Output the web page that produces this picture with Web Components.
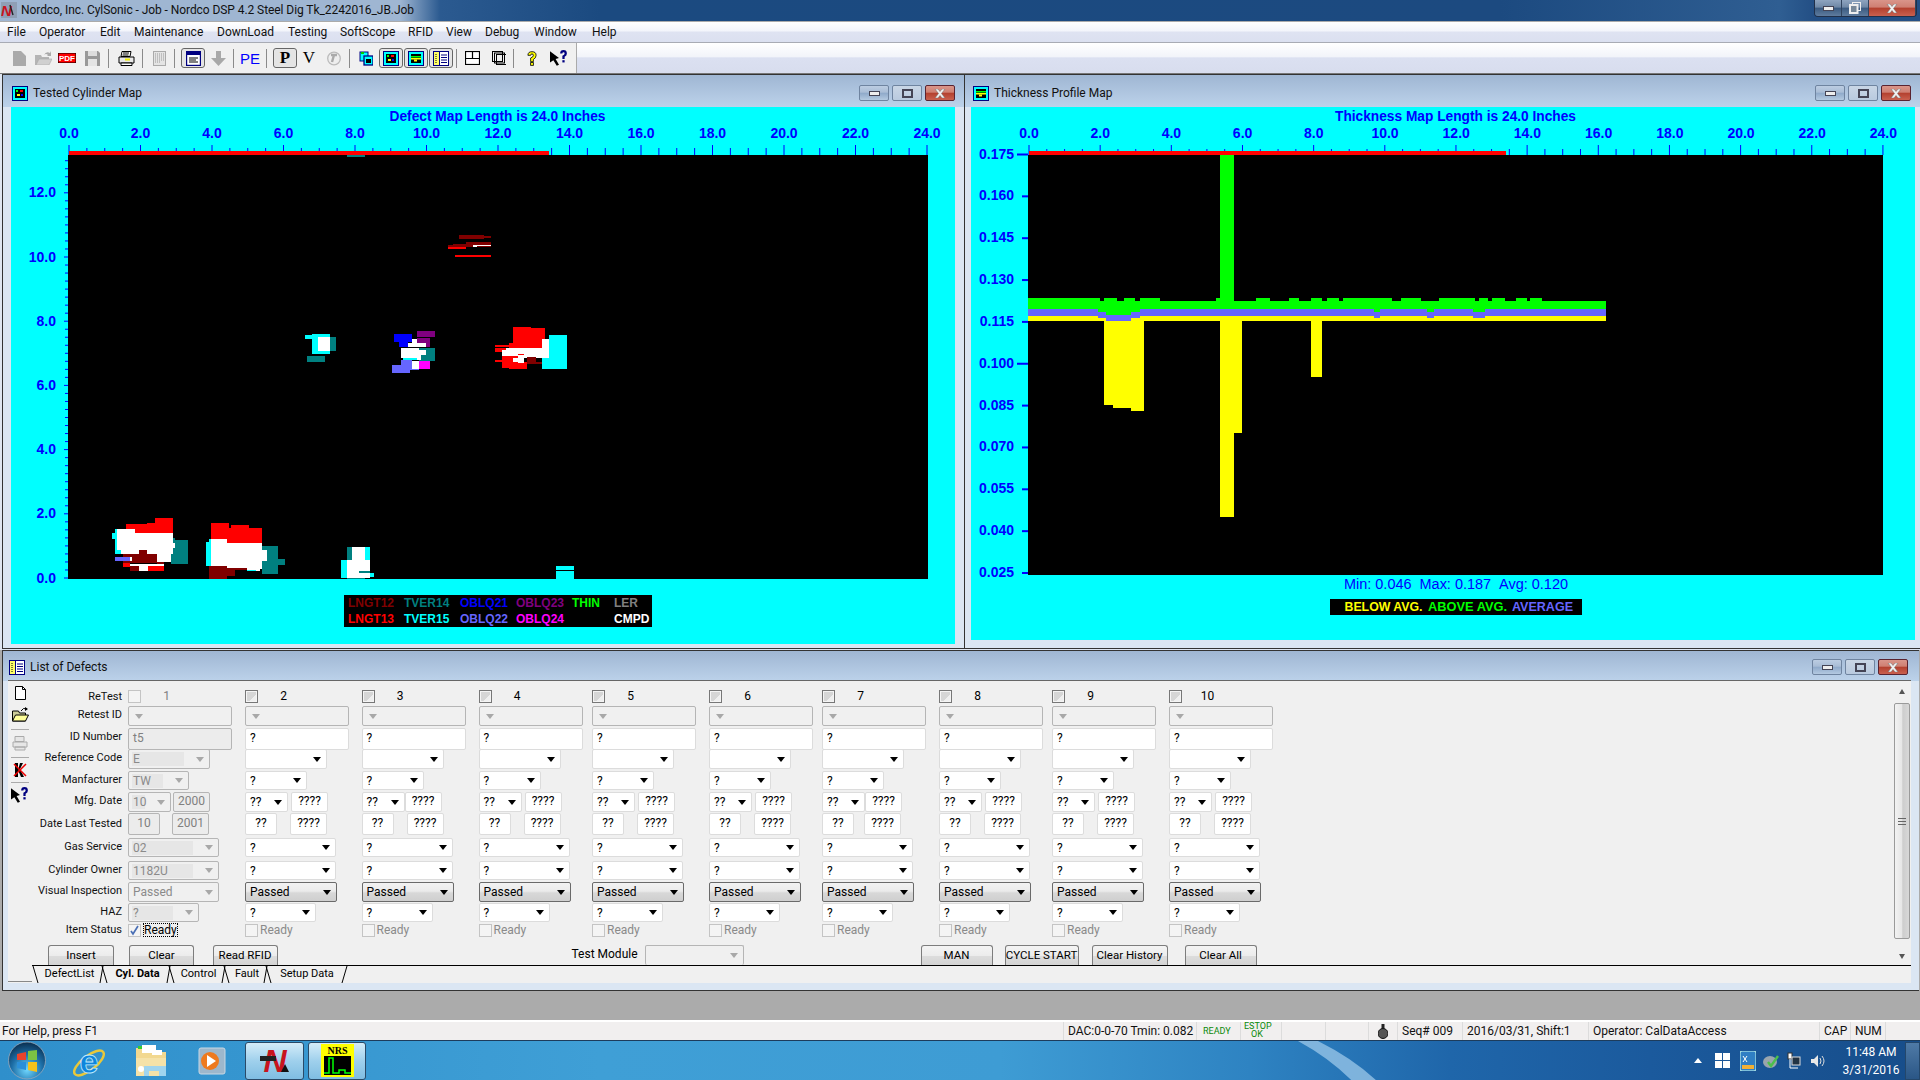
<!DOCTYPE html>
<html>
<head>
<meta charset="utf-8">
<title>CylSonic</title>
<style>
  html, body { margin: 0; padding: 0; width: 1920px; height: 1080px; overflow: hidden; background: #ababab; }
  body { display: flex; flex-direction: column; font: 12px Roboto, "Liberation Sans", sans-serif; color: #000; }
  mdi-area { flex: 1; min-height: 0; }
</style>
</head>
<body>
  <app-titlebar>Nordco, Inc. CylSonic - Job - Nordco DSP 4.2 Steel Dig Tk_2242016_JB.Job</app-titlebar>
  <app-menubar></app-menubar>
  <app-toolbar></app-toolbar>
  <mdi-area>
    <mdi-window slot="left" name="Tested Cylinder Map" icon="map" style="width:962px;height:575px;--ml:8px">
      <defect-map></defect-map>
    </mdi-window>
    <mdi-window slot="right" name="Thickness Profile Map" icon="profile" style="width:956px;height:575px;--ml:6px;--pl:8px">
      <thickness-map></thickness-map>
    </mdi-window>
    <mdi-window slot="bottom" name="List of Defects" icon="list" style="width:1917px;height:341px;--ml:5px;--pl:6px;--pr:11px;--head:30px;--pt:2px">
      <defect-form></defect-form>
    </mdi-window>
  </mdi-area>
  <app-statusbar></app-statusbar>
  <app-taskbar></app-taskbar>

<script>
const ICONS = {
  map: `<svg width="16" height="15" viewBox="0 0 16 15"><rect x=".5" y=".5" width="15" height="14" fill="#0ff" stroke="#000080"/><rect x="3" y="3" width="10" height="9" fill="#000"/><rect x="4" y="4" width="2" height="2" fill="#0f0"/><rect x="8" y="4" width="3" height="2" fill="#f00"/><rect x="5" y="8" width="3" height="2" fill="#ff0"/><rect x="9" y="8" width="2" height="2" fill="#00f"/></svg>`,
  profile: `<svg width="16" height="15" viewBox="0 0 16 15"><rect x=".5" y=".5" width="15" height="14" fill="#0ff" stroke="#000080"/><rect x="3" y="3" width="10" height="9" fill="#000"/><rect x="3" y="5" width="10" height="1.5" fill="#0f0"/><rect x="3" y="7" width="10" height="1.5" fill="#ff0"/><rect x="6" y="8.5" width="3" height="2" fill="#ff0"/></svg>`,
  list: `<svg width="16" height="15" viewBox="0 0 16 15"><rect x=".5" y=".5" width="15" height="14" fill="#fff" stroke="#000080"/><rect x="1" y="1" width="5" height="13" fill="#ff6"/><path d="M6.5 1v13M8 4h6M8 6.5h6M8 9h6M8 11.5h6" stroke="#000080"/><path d="M3 3v9" stroke="#000" stroke-dasharray="1 1"/></svg>`
};

// simple base: subclasses give css() and html(), rendered when connected
class Base extends HTMLElement {
  connectedCallback() {
    if (this.shadowRoot) return;
    this.attachShadow({ mode: "open" }).innerHTML = `<style>${this.css()}</style>${this.html()}`;
  }
  css() { return ""; }
  html() { return "<slot></slot>"; }
  num(name, d) { return this.hasAttribute(name) ? Number(this.getAttribute(name)) : d; }
}

class AppTitlebar extends Base {
  css() { return `
    :host { display: flex; height: 21px; align-items: stretch; flex: none;
      background: linear-gradient(90deg,#9fb6d2 0,#9fb6d2 400px,#2b5a90 440px,#1b4a80 600px,#1c4a80 1500px,#2f5e92 1780px,#234f85 1814px); }
    .ic { width: 20px; padding: 2px 0 0 1px; box-sizing: border-box; }
    .txt { flex: 1; line-height: 21px; padding-left: 1px; color: #111; font-size: 12px; white-space: nowrap; letter-spacing: -.07px;}
    .btns { display: flex; height: 17px; margin-right: 3px; border: 1px solid #20304a; border-top: 0; border-radius: 0 0 4px 4px; box-sizing: border-box; overflow: hidden; }
    win-btn { --w: 27px; --h: 16px; }
  `; }
  html() { return `<div class="ic"><svg width="16" height="16" viewBox="0 0 16 16"><rect width="16" height="16" fill="#8f9fb5"/><text x="0" y="14" font-family="Liberation Sans" font-weight="bold" font-style="italic" font-size="15" fill="#c8141e">N</text><path d="M9 3l3 10" stroke="#222" stroke-width="1.4"/></svg></div>
    <div class="txt"><slot></slot></div>
    <div class="btns"><win-btn kind="min" flat></win-btn><win-btn kind="max2" flat></win-btn><win-btn kind="close" flat style="--w:47px"></win-btn></div>`; }
}

class WinBtn extends Base {
  css() {
    const flat = this.hasAttribute("flat");
    const close = this.getAttribute("kind") == "close";
    const bg = close ? "linear-gradient(#d9958a 0,#cf7f72 45%,#b3402e 50%,#c9604f 100%)"
      : this.getAttribute("kind") == "max" ? "linear-gradient(#c9d6e6,#b9cadf)"
      : flat ? "linear-gradient(#8ea4bf 0,#6f88a6 45%,#3a5a80 50%,#5f7c9e 100%)" : "linear-gradient(#bccde2 0,#a9bdd6 45%,#8ea9c9 50%,#b4c9e1 100%)";
    const bd = flat ? "0" : (close ? "1px solid #5a2330" : "1px solid #6f84a0");
    return `:host { display: block; width: var(--w,31px); height: var(--h,16px); box-sizing: border-box; background: ${bg}; border: ${bd};
      ${flat ? "border-right: 1px solid #30445f;" : "border-radius: 2px;"} display: flex; align-items: center; justify-content: center; }`;
  }
  html() {
    const k = this.getAttribute("kind");
    if (k == "min") return `<svg width="11" height="5"><rect x=".5" y=".5" width="10" height="4" fill="#eee" stroke="#445"/></svg>`;
    if (k == "max") return `<svg width="11" height="9"><rect x="1" y="1" width="9" height="7" fill="none" stroke="#445" stroke-width="2"/></svg>`;
    if (k == "max2") return `<svg width="12" height="12"><rect x="3.5" y=".5" width="8" height="8" fill="none" stroke="#eee"/><rect x="1" y="3" width="7.5" height="8" fill="#789" stroke="#eee" stroke-width="2"/></svg>`;
    return `<svg width="12" height="9" viewBox="0 0 12 9"><path d="M1 0h3l2 2.500 2-2.500h3L7.500 4.500 11 9H8L6 6.500 4 9H1l3.500-4.500z" fill="#f2f2f2" stroke="#666" stroke-width=".5"/></svg>`;
  }
}

class AppMenubar extends Base {
  css() { return `
    :host { display: flex; height: 21px; flex: none; box-sizing: border-box; padding-left: 7px; align-items: center;
      background: linear-gradient(#fff 0,#f3f5fb 45%,#dfe3f2 50%,#dbe0f0 100%); border-bottom: 1px solid #a8abb4; margin-top: 1px; font-size: 12px; color: #111; }
    span { white-space: nowrap; }
  `; }
  html() {
    const items = [["File",0,18],["Operator",14,47],["Edit",14,20],["Maintenance",14,69],["DownLoad",14,56],["Testing",15,39],["SoftScope",13,54],["RFID",14,23],["View",15,25],["Debug",14,35],["Window",14,44],["Help",14,30]];
    return items.map(([t, m, w]) => `<span style="margin-left:${m}px;width:${w}px">${t}</span>`).join("");
  }
}

class AppToolbar extends Base {
  css() { return `
    :host { display: flex; height: 31px; flex: none; box-sizing: border-box; background: linear-gradient(#fff 0,#f2f4fa 45%,#dbe0f1 50%,#d8ddee 100%); border-bottom: 1px solid #777; }
    .bar { display: flex; width: 577px; height: 30px; background: #f0f0f0; border-right: 1px solid #aaa; box-sizing: border-box; align-items: center; position: relative; }
    i { display: block; flex: none; font-style: normal; height: 20px; display: flex; align-items: center; justify-content: center; box-sizing: border-box; }
    .sep { width: 1px; background: #8a8a8a; height: 19px; }
    .on { border: 1px solid #666; border-radius: 3px; background: #e4e4e4; box-shadow: inset 0 0 1px #fff; }
    .t { font: 15px "Liberation Sans",sans-serif; color: #00f; }
    .s { font: bold 17px "Liberation Serif",serif; }
    .v { font: 17px "Liberation Serif",serif; }
  `; }
  html() {
    const w = (m, wd, inner, cls = "") => `<i class="${cls}" style="margin-left:${m}px;width:${wd}px">${inner}</i>`;
    const sep = (m) => `<i class="sep" style="margin-left:${m}px"></i>`;
    const windowed = `<svg width="15" height="15"><rect x=".5" y=".5" width="14" height="14" fill="#fff" stroke="#000080" stroke-width="1.4"/><rect x="1" y="1" width="13" height="3" fill="#000080"/><path d="M3 7h9M3 9h7M3 11h9" stroke="#000"/></svg>`;
    return `<div class="bar">
      ${w(12,14,`<svg width="13" height="15"><path d="M0 0h8l5 5v10H0z" fill="#aaa"/></svg>`)}
      ${w(9,17,`<svg width="17" height="14"><path d="M0 4h6l1 2h7v8H0z" fill="#b5b5b5"/><path d="M1 14l3-6h13l-3 6z" fill="#d0d0d0" stroke="#aaa" stroke-width=".6"/><path d="M9 4q2-4 6-2l1-2v5h-4l1-1q-2-2-4 0" fill="#aaa"/></svg>`)}
      ${w(6,18,`<svg width="18" height="10"><rect width="18" height="10" fill="#f00" stroke="#000" stroke-width="1"/><text x="9" y="8" text-anchor="middle" font-family="Liberation Sans" font-weight="bold" font-size="8" fill="#fff">PDF</text></svg>`)}
      ${w(9,15,`<svg width="15" height="15"><path d="M0 0h13l2 2v13H0z" fill="#999"/><rect x="3" y="0" width="9" height="5" fill="#ddd"/><rect x="3" y="8" width="9" height="7" fill="#e4e4e4"/></svg>`)}
      ${sep(8)}
      ${w(9,17,`<svg width="17" height="15"><path d="M4 .5h9l-1 5H3z" fill="#fff" stroke="#000"/><path d="M1 6h15v6H1z" fill="#e8e8e8" stroke="#000"/><path d="M3 12h11v2.500H3z" fill="#fff" stroke="#000"/><rect x="7" y="7.500" width="5" height="2" fill="#ee0"/><path d="M5 2h6M4.500 4h6" stroke="#000"/></svg>`)}
      ${sep(7)}
      ${w(10,13,`<svg width="13" height="15"><rect x=".5" y=".5" width="12" height="14" fill="#e4e4e4" stroke="#aaa"/><path d="M2 3h9M2 5h9M2 7h9M2 9h9M2 11h6" stroke="#999" stroke-dasharray="1 1"/></svg>`)}
      ${sep(8)}
      ${w(6,24,windowed,"on")}
      ${w(6,15,`<svg width="15" height="15"><path d="M5 0h5v7h5l-7.500 8L0 7h5z" fill="#a8a8a8"/></svg>`)}
      ${sep(7)}
      ${w(8,16,`PE`,"t")}
      ${sep(8)}
      ${w(6,24,`P`,"on s")}
      ${w(4,16,`V`,"v")}
      ${w(10,14,`<svg width="14" height="15"><circle cx="7" cy="7.500" r="6.300" fill="#eee" stroke="#bbb" stroke-width="1.300"/><path d="M4 4h6M7 4l-2 7" stroke="#aaa" stroke-width="2.400"/></svg>`)}
      ${sep(8)}
      ${w(9,14,`<svg width="15" height="15"><rect x="1" y="1" width="8" height="9" fill="#0ff" stroke="#000080"/><rect x="5" y="5" width="9" height="9" fill="#0ff" stroke="#000080" stroke-width="1.300"/><rect x="7" y="8" width="5" height="4" fill="#000"/><rect x="2" y="1" width="3" height="2" fill="#0c0"/></svg>`)}
      ${w(6,24,ICONS.map,"on")}
      ${w(1,24,ICONS.profile,"on")}
      ${w(1,24,ICONS.list,"on")}
      ${sep(3)}
      ${w(8,15,`<svg width="15" height="14"><rect x=".5" y=".5" width="14" height="13" fill="#fff" stroke="#000" stroke-width="1.200"/><path d="M0 7.500h15M7.500 0v7" stroke="#000" stroke-width="1.200"/></svg>`)}
      ${w(12,14,`<svg width="15" height="14"><rect x=".5" y=".5" width="10" height="10" fill="none" stroke="#000"/><rect x="2.500" y="2" width="10" height="10" fill="none" stroke="#000"/><rect x="4.500" y="3.500" width="10" height="10" fill="none" stroke="#000"/></svg>`)}
      ${sep(7)}
      ${w(13,10,`<svg width="11" height="17" viewBox="0 0 11 17"><path d="M1 5q0-4 4.500-4t4.500 4q0 3-3 4.500V12H4V8q3-1 3-3 0-1.500-1.500-1.500T4 5z" fill="#ff0" stroke="#000" stroke-width=".9"/><rect x="4" y="13" width="3" height="3" fill="#ff0" stroke="#000" stroke-width=".9"/></svg>`)}
      ${w(13,18,`<svg width="18" height="17" viewBox="0 0 16 15"><path d="M0 1l8 6-3 1 3 5-2 1-3-5-3 2z" fill="#000"/><path d="M9 3q0-3 3-3t3 3q0 2-2 3v2h-2V5q2-1 2-2 0-1-1-1t-1 1z" fill="#000080"/><rect x="11" y="9" width="2" height="2" fill="#000080"/></svg>`)}
    </div>`;
  }
}

class MdiArea extends Base {
  css() { return `
    :host { display: block; background: #ababab; }
    .top { display: flex; height: 576px; background: #dfe6f1; box-sizing: border-box; padding-left: 2px; }
    .b { padding-left: 2px; background: #ababab; }
  `; }
  html() { return `<div class="top"><slot name="left"></slot><slot name="right"></slot></div><div class="b"><slot name="bottom"></slot></div>`; }
}

class MdiWindow extends Base {
  css() { return `
    :host { display: flex; flex-direction: column; box-sizing: border-box; background: #dbe6f3; border: 1px solid #333; border-width: 1px 0 1px 1px; }
    .head { height: var(--head,32px); flex: none; display: flex; align-items: center; background: linear-gradient(#9fb6d3,#bcd2ea); padding: var(--pt,4px) var(--pr,9px) 0 var(--pl,9px); font-size: 12px; color: #111; box-sizing: border-box; }
    .head svg { display: block; }
    .name { flex: 1; margin-left: 5px; }
    win-btn { margin-left: 3px; --w: 30px; --h: 16px; }
    .body { flex: 1; min-height: 0; margin: 0 0 2px var(--ml,7px); }
  `; }
  html() { return `<div class="head">${ICONS[this.getAttribute("icon")]}<span class="name">${this.getAttribute("name")}</span>
    <win-btn kind="min"></win-btn><win-btn kind="max"></win-btn><win-btn kind="close"></win-btn></div><div class="body"><slot></slot></div>`; }
}

// shared svg helpers for the two charts, all in page coordinates
const rect = (x1, y1, x2, y2, c) => `<rect x="${x1}" y="${y1}" width="${x2 - x1}" height="${y2 - y1}" fill="${c}"/>`;
const label = (x, y, s, o = {}) => `<text x="${x}" y="${y}" text-anchor="${o.a || "middle"}" font-family="Liberation Sans" font-size="${o.size || 14}" ${o.bold === false ? "" : 'font-weight="bold"'} fill="${o.fill || "#00f"}" ${o.len ? `textLength="${o.len}" lengthAdjust="spacingAndGlyphs"` : ""}>${s}</text>`;

const DK = "#800000", RD = "#f00", TL = "#008080", CY = "#0ff", WH = "#fff", PU = "#800080", BL = "#00f", PW = "#6666ff", MG = "#f0f";
const BLOBS = [
  [1117,105,1187,117,DK],[1187,108,1207,114,DK],[1100,132,1137,141,DK],[1086,135,1100,141,DK],[1137,126,1207,141,DK],[1168,135,1207,138,WH],[1156,135,1168,141,WH],[1086,141,1137,147,RD],[1106,165,1207,171,RD],
  [686,405,706,417,CY],[706,402,756,462,CY],[722,411,756,453,WH],[756,411,773,453,TL],[692,468,742,486,TL],
  [1000,393,1050,411,PU],[1000,414,1036,441,PU],[935,402,986,426,BL],[950,426,974,441,BL],[986,417,1000,429,WH],[974,429,1025,441,WH],[1005,444,1050,483,TL],[955,444,1005,474,WH],[1005,450,1025,465,WH],[960,474,1000,480,CY],[1000,465,1011,480,WH],[955,480,986,510,PW],[930,495,980,519,PW],[980,507,1005,510,PW],[986,483,1005,507,WH],[1005,483,1036,507,MG],
  [1369,405,1420,507,CY],[1350,417,1369,507,CY],[1268,381,1318,444,RD],[1318,384,1358,444,RD],[1257,429,1350,444,RD],[1218,435,1257,441,RD],[1218,444,1238,456,RD],[1238,444,1250,450,RD],[1238,450,1369,474,WH],[1250,444,1350,450,WH],[1350,417,1369,474,WH],[1238,468,1282,504,RD],[1257,486,1308,507,RD],[1268,474,1300,486,WH],[1282,462,1300,465,RD],[1282,468,1300,490,WH],[1308,471,1333,492,DK],[1333,486,1350,492,DK],[1218,480,1238,486,RD],
  [266,954,316,1005,RD],[245,969,266,1000,RD],[185,972,245,1000,RD],[311,1020,358,1092,TL],[316,1014,322,1020,TL],[146,999,160,1017,CY],[154,988,185,1062,CY],[160,987,210,1050,WH],[172,1000,316,1062,WH],[316,1030,322,1044,WH],[220,1050,245,1062,DK],[176,1062,272,1089,DK],[272,1086,291,1095,DK],[272,1062,311,1086,WH],[154,1071,196,1083,PW],[196,1071,202,1083,WH],[176,1089,196,1101,RD],[196,1092,290,1097,WH],[196,1097,221,1113,DK],[221,1097,246,1113,WH],[246,1098,291,1113,RD],
  [423,969,473,1017,RD],[473,984,479,1017,RD],[479,975,529,1029,RD],[529,984,566,1038,RD],[469,1017,479,1029,RD],[566,1038,610,1122,TL],[610,1077,630,1095,TL],[409,1026,417,1098,CY],[417,1017,423,1098,CY],[423,1017,469,1098,WH],[469,1029,566,1107,WH],[566,1050,580,1083,WH],[524,1107,560,1113,WH],[417,1098,468,1137,DK],[468,1104,490,1128,DK],[490,1104,524,1110,DK],[524,1110,550,1114,CY],
  [804,1041,818,1080,TL],[818,1041,854,1098,WH],[854,1041,868,1098,CY],[787,1080,804,1134,CY],[804,1080,868,1134,WH],[837,1113,868,1118,TL],[868,1119,879,1131,CY],[804,1134,854,1137,TL],
  [1389,1098,1439,1110,CY],[1389,1113,1439,1137,CY]
];

class DefectMap extends Base {
  css() { return `:host { display: block; width: 944px; height: 537px; background: #0ff; } svg { display: block; }`; }
  html() {
    let s = rect(68, 155, 928, 579, "#000");
    for (let i = 0; i <= 48; i++) { const x = 69 + i * 17.875; s += rect(x - .5, i % 4 ? 148 : 145, x + .5, 155, "#00f"); }
    for (let i = 0; i <= 12; i++) s += label(69 + i * 71.5, 138, (i * 2).toFixed(1));
    for (let i = 0; i <= 52; i++) { const y = 578 - i * 8.025; s += rect(i % 8 ? 65 : 64, y - .5, 68, y + .5, "#00f"); }
    for (let i = 0; i <= 6; i++) s += label(56, 582.5 - i * 64.2, (i * 2).toFixed(1), { a: "end" });
    s += label(497.5, 121, "Defect Map Length is 24.0 Inches", { len: 216 });
    s += rect(69, 151, 549, 155, "#f00") + rect(347, 155, 365, 157, "#008080");
    s += `<g transform="translate(60 200) scale(.35714 .33333)" shape-rendering="crispEdges">${BLOBS.map(b => rect(b[0], b[1], b[2], b[3], b[4])).join("")}</g>`;
    // legend
    s += rect(344, 595, 652, 627, "#000");
    const leg = [[348,607,"LNGT12",DK],[404,607,"TVER14",TL],[460,607,"OBLQ21",BL],[516,607,"OBLQ23",PU],[572,607,"THIN","#0f0"],[614,607,"LER","#808080"],
      [348,623,"LNGT13",RD],[404,623,"TVER15",CY],[460,623,"OBLQ22",PW],[516,623,"OBLQ24",MG],[614,623,"CMPD",WH]];
    s += leg.map(l => label(l[0], l[1], l[2], { a: "start", size: 12, fill: l[3] })).join("");
    return `<svg width="944" height="537" viewBox="11 107 944 537">${s}</svg>`;
  }
}

class ThicknessMap extends Base {
  css() { return `:host { display: block; width: 944px; height: 533px; background: #0ff; } svg { display: block; }`; }
  html() {
    let s = rect(1028, 155, 1883, 575, "#000");
    for (let i = 0; i <= 48; i++) { const x = 1029 + i * 17.79; s += rect(x - .5, i % 4 ? 149 : 145, x + .5, 155, "#00f"); }
    for (let i = 0; i <= 12; i++) s += label(1029 + i * 71.2, 138, (i * 2).toFixed(1));
    for (let i = 0; i <= 10; i++) {
      const y = 154.5 + i * 41.85, long = i == 0 || i == 5;
      s += rect(long ? 1017 : 1022, y - 1, 1028, y + 1, "#00f");
      s += label(1014, y + 4, (0.175 - i * 0.015).toFixed(3), { a: "end" });
    }
    s += label(1455.5, 121, "Thickness Map Length is 24.0 Inches", { len: 241 });
    s += rect(1029, 151, 1506, 155, "#f00");
    const Y = "#ff0", G = "#0f0", P = "#6666ff";
    // first group is in zoomed x units, see transform
    const bumps = [[162,333],[343,373],[390,416],[428,475],[608,618],[703,736],[782,806],[834,860],[872,900],[910,1026],[1048,1095],[1138,1224],[1233,1254],[1264,1295],[1321,1346],[1355,1383]];
    let g = rect(618,255,651,693,G) + rect(162,693,1535,717,G) + bumps.map(b => rect(b[0],684,b[1],693,G)).join("");
    g += rect(162,717,1535,737,P) + rect(162,737,1535,753,Y);
    g += rect(328,725,428,744,P) + rect(347,717,406,735,G) + rect(347,735,406,753,P) + rect(328,717,347,725,G) + rect(406,717,428,725,G);
    for (const [a, b] of [[984,998],[1109,1126],[1219,1247]]) g += rect(a,717,b,725,G) + rect(a,725,b,744,P);
    s += `<g transform="translate(960 70) scale(.42092 .33333)" shape-rendering="crispEdges">${g}</g>`;
    s += rect(1104,321,1113,405,Y) + rect(1113,321,1131,408,Y) + rect(1131,321,1144,411,Y);
    s += rect(1220,321,1234,517,Y) + rect(1234,321,1242,433,Y) + rect(1311,321,1322,377,Y);
    s += label(1456, 589, "Min: 0.046&#160;&#160;Max: 0.187&#160;&#160;Avg: 0.120", { len: 224, bold: false });
    s += rect(1330, 599, 1582, 615, "#000");
    s += label(1344.5, 611, "BELOW AVG.", { a: "start", size: 12, fill: Y, len: 78 });
    s += label(1428, 611, "ABOVE AVG.", { a: "start", size: 12, fill: G, len: 79 });
    s += label(1512, 611, "AVERAGE", { a: "start", size: 12, fill: P, len: 61 });
    return `<svg width="944" height="533" viewBox="971 107 944 533">${s}</svg>`;
  }
}

// form controls
class XCombo extends Base {
  css() {
    const k = this.getAttribute("kind") || "white";
    const b = { white: "background:#fff;border:1px solid #dcdcdc;", off: "background:#f0f0f0;border:1px solid #b5b5b5;",
      pass: "background:linear-gradient(#f2f2f2 0,#ebebeb 45%,#d8d8d8 55%,#cfcfcf 100%);border:1px solid #6a6a6a;" }[k];
    return `
      :host { display: flex; align-items: center; box-sizing: border-box; width: ${this.num("w", 90)}px; height: ${this.num("h", 20)}px; ${b} border-radius: 2px; padding-left: 4px; font-size: 12px; position: relative; color: ${k == "off" ? "#8a8a8a" : "#000"}; }
      .v { flex: 1; white-space: nowrap; }
      .fill { background: #e6e6e6; height: 14px; line-height: 14px; padding-left: 1px; margin-left: -1px; flex: none; width: calc(100% - 25px); }
      .a { width: 0; height: 0; flex: none; margin: 0 5px 0 0; border: 4px solid transparent; border-top: 5px solid ${k == "off" ? "#a8a8a8" : "#000"}; border-bottom: 0; }
      .left { margin: 0 0 0 2px; }
    `;
  }
  html() {
    const k = this.getAttribute("kind") || "white", v = this.getAttribute("val") || "";
    if (this.hasAttribute("leftarrow")) return `<div class="a left"></div>`;
    return `<div class="${k == "off" && !this.hasAttribute("nofill") ? "fill" : "v"}">${v}</div>${k == "off" && !this.hasAttribute("nofill") ? '<div style="flex:1"></div>' : ""}<div class="a"></div>`;
  }
}

class XEdit extends Base {
  css() {
    const off = this.hasAttribute("off");
    return `:host { display: flex; align-items: center; justify-content: ${this.hasAttribute("center") ? "center" : "flex-start"}; box-sizing: border-box; width: ${this.num("w", 104)}px; height: ${this.num("h", 22)}px; padding: 0 4px 2px; border-radius: 2px; font-size: 12px;
      background: ${off ? "#ececec" : "#fff"}; border: 1px solid ${off ? "#b5b5b5" : "#dcdcdc"}; color: ${off ? "#808080" : "#000"}; }`;
  }
}

class XCheck extends Base {
  css() {
    const on = this.hasAttribute("shade");
    return `:host { display: inline-flex; align-items: center; font-size: 12px; color: ${this.hasAttribute("dim") ? "#8a8a8a" : "#000"}; }
      .b { width: 13px; height: 13px; box-sizing: border-box; flex: none; border: 1px solid ${on ? "#777" : "#c4c4c4"}; background: ${on ? "linear-gradient(135deg,#d6d6d6 0,#d6d6d6 60%,#efefef 60%)" : "#f4f4f4"}; ${on ? "box-shadow: inset 0 0 0 1px #f4f4f4;" : ""} }
      .t { margin-left: 2px; }
      .f { outline: 1px dotted #000; outline-offset: -1px; padding: 0 1px; }`;
  }
  html() {
    const t = this.getAttribute("text");
    const tick = this.hasAttribute("checked") ? `<svg width="11" height="11" viewBox="0 0 11 11" style="display:block"><path d="M2 6l2 3 5-8" fill="none" stroke="#4a6fb5" stroke-width="1.700"/></svg>` : "";
    return `<div class="b">${tick}</div>${t ? `<span class="t ${this.hasAttribute("focus") ? "f" : ""}">${t}</span>` : ""}`;
  }
}

class XBtn extends Base {
  css() { return `:host { display: flex; align-items: center; justify-content: center; flex: none; box-sizing: border-box; height: 20px; padding-bottom: 2px; width: ${this.num("w", 66)}px; border: 1px solid #7d7d7d; border-bottom: 0; border-radius: 3px 3px 0 0; font-size: 11.5px;
    background: linear-gradient(#f4f4f4 0,#ececec 50%,#dcdcdc 55%,#d4d4d4 100%); white-space: nowrap; }`; }
}

class DefectForm extends Base {
  css() { return `
    :host { display: grid; grid-template-columns: 24px 1fr 18px; grid-template-rows: 284px 18px; width: 1903px; height: 302px; background: #f0f0f0; font-size: 12px; border-top: 1px solid #666; box-sizing: content-box; margin-top: -1px; }
    .strip { display: flex; flex-direction: column; align-items: center; }
    .strip svg { display: block; flex: none; }
    .strip hr { width: 18px; height: 1px; border: 0; background: #aaa; margin: 0; flex: none; }
    .grid { display: grid; align-items: start; padding-top: 8px;
      grid-template-columns: 90px 6px 117px 116.500px 117px 113.500px 117px 113px 117px 113px 117px 100px;
      grid-template-rows: 17px 22px 21px 22px 21px 21px 25px 23px 21px 21px 20px 22px 20px; }
    .lab { grid-column: 1; text-align: right; white-space: nowrap; line-height: 18px; font-size: 11px; color: #111; }
    .foot { grid-column: 1 / -1; display: flex; align-items: flex-start; height: 20px; }
    .pair { display: flex; }
    .num { display: inline-block; width: 25px; text-align: center; margin-left: 13px; }
    .top { display: flex; align-items: center; }
    .off1 { color: #808080; }
    .sb { grid-row: 1; width: 17px; margin-top: 5px; height: 277px; position: relative; background: #f0f0f0; display: flex; flex-direction: column; align-items: center; }
    .thumb { width: 16px; height: 236px; margin-top: 9px; box-sizing: border-box; border: 1px solid #9a9a9a; border-radius: 2px; background: linear-gradient(90deg,#f2f2f2,#e6e6e6 50%,#cdcdcd 55%,#d8d8d8); display: flex; align-items: center; justify-content: center; flex: none; }
    .ar { width: 0; height: 0; border: 3.500px solid transparent; flex: none; margin-top: 3px; }
    .tabs { grid-column: 1 / 3; grid-row: 2; display: flex; align-items: flex-start; }
    .left { width: 24px; height: 16px; border-bottom: 1px solid #888; flex: none; }
    .rail { flex: 1; height: 17px; border-top: 1px solid #000; display: flex; }
    .tab { height: 17px; line-height: 15px; white-space: nowrap; text-align: center; flex: none; font-size: 11px; }
    .tab svg { display: block; }
    .cap { grid-row: 2; grid-column: 3; border-top: 1px solid #000; }
  `; }
  html() {
    const labs = ["ReTest","Retest ID","ID Number","Reference Code","Manfacturer","Mfg. Date","Date Last Tested","Gas Service","Cylinder Owner","Visual Inspection","HAZ","Item Status"];
    const nudge = { 0: -1, 6: 2, 11: -2 };
    let g = labs.map((t, r) => `<div class="lab" style="grid-row:${r + 1};margin-top:${nudge[r] || 0}px">${t}</div>`).join("");
    for (let c = 0; c < 10; c++) {
      const first_ = c == 0, col = c + 3;
      const cells = [];
      cells.push(`<div class="top"><x-check ${first_ ? "" : "shade"}></x-check><span class="num ${first_ ? "off1" : ""}">${c + 1}</span></div>`);
      cells.push(`<x-combo kind="off" nofill leftarrow w="104" h="20"></x-combo>`);
      cells.push(first_ ? `<x-edit off w="104" h="22">t5</x-edit>` : `<x-edit w="104" h="22">?</x-edit>`);
      cells.push(first_ ? `<x-combo kind="off" w="82" val="E"></x-combo>` : `<x-combo w="82"></x-combo>`);
      cells.push(first_ ? `<x-combo kind="off" w="61" h="19" val="TW"></x-combo>` : `<x-combo w="62" h="19" val="?"></x-combo>`);
      const yGap = c == 2 || c == 6 ? 0 : 3, lGap = c == 6 ? 10 : 13;
      cells.push(`<div class="pair">${first_ ? `<x-combo kind="off" w="43" val="10"></x-combo><x-edit off center w="37" h="20" style="margin-left:2px">2000</x-edit>` : `<x-combo w="43" val="??"></x-combo><x-edit center w="37" h="20" style="margin-left:${yGap}px">????</x-edit>`}</div>`);
      cells.push(`<div class="pair">${first_ ? `<x-edit off center w="32" h="22">10</x-edit><x-edit off center w="37" h="22" style="margin-left:12px">2001</x-edit>` : `<x-edit center w="32" h="22">??</x-edit><x-edit center w="37" h="22" style="margin-left:${lGap}px">????</x-edit>`}</div>`);
      cells.push(first_ ? `<x-combo kind="off" w="91" h="19" val="02"></x-combo>` : `<x-combo w="91" h="19" val="?"></x-combo>`);
      cells.push(first_ ? `<x-combo kind="off" w="91" h="19" val="1182U"></x-combo>` : `<x-combo w="91" h="19" val="?"></x-combo>`);
      cells.push(first_ ? `<x-combo kind="off" nofill w="91" val="Passed"></x-combo>` : `<x-combo kind="pass" w="92" val="Passed"></x-combo>`);
      cells.push(first_ ? `<x-combo kind="off" w="71" h="19" val="?"></x-combo>` : `<x-combo w="71" h="19" val="?"></x-combo>`);
      cells.push(first_ ? `<x-check checked focus text="Ready"></x-check>` : `<x-check dim text="Ready"></x-check>`);
      g += cells.map((h, r) => `<div style="grid-column:${col};grid-row:${r + 1}">${h}</div>`).join("");
    }
    const foot = `<div class="foot" style="grid-row:13">
      <x-btn w="66" style="margin-left:16px">Insert</x-btn>
      <x-btn w="65" style="margin-left:15px">Clear</x-btn>
      <x-btn w="65" style="margin-left:18.500px">Read RFID</x-btn>
      <span style="margin-left:294px;width:73px;line-height:18px;white-space:nowrap">Test Module</span>
      <x-combo kind="off" nofill w="99" h="20" style="border-bottom:0"></x-combo>
      <x-btn w="72" style="margin-left:177px">MAN</x-btn>
      <x-btn w="74" style="margin-left:12px">CYCLE START</x-btn>
      <x-btn w="76" style="margin-left:13px">Clear History</x-btn>
      <x-btn w="72" style="margin-left:17px">Clear All</x-btn></div>`;
    const strip = `<div class="strip" style="grid-row:1;padding-top:5px">
      <svg width="13" height="14" viewBox="0 0 13 14"><path d="M1.500.5h7l3 3v10h-10z" fill="#fff" stroke="#000"/><path d="M8.500.5v3h3" fill="none" stroke="#000"/></svg>
      <svg style="margin-top:7px" width="17" height="15" viewBox="0 0 17 15"><path d="M.5 4h6l1 2h6v8H.5z" fill="#cc9" stroke="#000"/><path d="M.5 14l3-6h13l-3 6z" fill="#ff9" stroke="#000"/><path d="M9 4q2-4 6-2" fill="none" stroke="#000"/><path d="M13 0l3 2-3 2z" fill="#000"/></svg>
      <hr style="margin-top:7px">
      <svg style="margin-top:6px" width="16" height="15" viewBox="0 0 16 15"><path d="M3 .5h9v5H3zM1 6h14v5H1zM3 11h10v3H3z" fill="#e6e6e6" stroke="#aaa"/></svg>
      <hr style="margin-top:6px">
      <svg style="margin-top:5px" width="14" height="14" viewBox="0 0 14 14"><path d="M2 0h3v14H2zM7 0l3 0-3 6 4 8H8L5 7z" fill="#000"/><path d="M1 1l12 12M13 1L1 13" stroke="#e00" stroke-width="1.500"/></svg>
      <hr style="margin-top:5px">
      <svg style="margin-top:4px" width="18" height="17" viewBox="0 0 16 15"><path d="M0 1l8 6-3 1 3 5-2 1-3-5-3 2z" fill="#000"/><path d="M9 3q0-3 3-3t3 3q0 2-2 3v2h-2V5q2-1 2-2 0-1-1-1t-1 1z" fill="#000080"/><rect x="11" y="9" width="2" height="2" fill="#000080"/></svg>
    </div>`;
    // slanted tab edges: "/\" where two tabs meet
    const peak = `<svg width="10" height="17" style="flex:none;display:block" viewBox="0 0 10 17"><path d="M1 17L4 0M3 0l5 17" stroke="#000" fill="none"/></svg>`;
    const lead = `<svg width="8" height="17" style="flex:none;display:block" viewBox="0 0 8 17"><path d="M1 0l5 17" stroke="#000" fill="none"/></svg>`;
    const tail = `<svg width="8" height="17" style="flex:none;display:block" viewBox="0 0 8 17"><path d="M6 0L1 17" stroke="#000" fill="none"/></svg>`;
    const tab = (t, w, bold) => `<div class="tab" style="width:${w}px;${bold ? "font-weight:bold" : ""}">${t}</div>`;
    const tabs = `<div class="tabs"><div class="left"></div><div class="rail">
      ${lead}${tab("DefectList", 59)}${peak}${tab("Cyl. Data", 57, 1)}${peak}${tab("Control", 45)}${peak}${tab("Fault", 32)}${peak}${tab("Setup Data", 68)}${tail}
    </div></div><div class="cap"></div>`;
    return `${strip}<div class="grid" style="grid-row:1">${g}${foot}</div>
      <div class="sb"><div class="ar" style="border-bottom:5px solid #555;border-top:0"></div><div class="thumb"><svg width="8" height="7"><path d="M0 .5h8M0 3.500h8M0 6.500h8" stroke="#666"/></svg></div><div style="flex:1"></div><div class="ar" style="border-top:5px solid #555;border-bottom:0;margin-bottom:4px"></div></div>
      ${tabs}`;
  }
}

class AppStatusbar extends Base {
  css() { return `
    :host { display: flex; flex: none; height: 20px; box-sizing: border-box; background: #f1efef; border-top: 2px solid #fff; font-size: 12px; align-items: stretch; color: #111; }
    span { display: flex; align-items: center; box-sizing: border-box; padding-left: 4px; border-left: 1px solid #dcdcdc; flex: none; white-space: nowrap; }
    .first { border: 0; padding-left: 2px; }
    .g { color: #0a8a0a; font-size: 9px; padding-left: 6px; }
  `; }
  html() {
    const w = [[1063,"For Help, press F1","first"],[133,"DAC:0-0-70 Tmin: 0.082"],[44,"READY","g"],[41,'',"g"],[44,""],[43,""],[29,"BOT"],[65,"Seq# 009"],[126,"2016/03/31, Shift:1"],[231,"Operator: CalDataAccess"],[31,"CAP"],[35,"NUM"],[35,""]];
    return w.map(([wd, t, c]) => {
      if (t == "BOT") return `<span style="width:${wd}px;justify-content:center;padding:0"><svg width="10" height="15" viewBox="0 0 10 15"><rect x="3.500" y="0" width="3" height="5" fill="#222"/><ellipse cx="5" cy="9.500" rx="5" ry="5" fill="#555" stroke="#111"/></svg></span>`;
      if (c == "g" && !t) return `<span class="g" style="width:${wd}px;flex-direction:column;line-height:8px;font-size:9px;align-items:flex-start;padding-left:3px"><div>ESTOP</div><div style="margin-left:7px">OK</div></span>`;
      return `<span class="${c || ""}" style="width:${wd}px">${t}</span>`;
    }).join("");
  }
}

class AppTaskbar extends Base {
  css() { return `
    :host { display: flex; flex: none; height: 40px; align-items: center; position: relative; overflow: hidden; box-sizing: border-box; border-top: 1px solid #1d3c5c;
      background: linear-gradient(90deg,#2f8fcb 0,#3f9fd6 600px,#3e9cd4 1000px,#2e83c2 1250px,#1f66aa 1450px,#1b5a9d 1650px,#174d8a 1920px); }
    .streak { position: absolute; left: 1298px; top: -6px; width: 90px; height: 52px; }
    .it { flex: none; display: flex; align-items: center; justify-content: center; position: relative; }
    .open { height: 38px; box-sizing: border-box; border: 1px solid #2a4a68; border-radius: 3px; background: linear-gradient(#d4ecf9,#9fd0ec 50%,#7fbde2); }
    .tray { position: absolute; right: 0; top: 0; bottom: 0; width: 233px; display: flex; align-items: center; }
    .clock { color: #fff; font-size: 12px; text-align: center; line-height: 18px; width: 62px; margin-left: auto; flex: none; }
    .sd { width: 15px; height: 38px; flex: none; margin-left: 3px; border: 1px solid #24476b; box-sizing: border-box; background: linear-gradient(#4f7aa6,#2a5686); }
  `; }
  html() {
    return `<svg class="streak" viewBox="0 0 90 52"><path d="M0 6h20q40 20 65 46H60Q35 25 0 6z" fill="#9cc8ea" opacity=".75"/></svg>
    <div class="it" style="width:54px"><svg width="42" height="39" viewBox="0 0 42 39">
      <defs><radialGradient id="o" cx=".5" cy=".75" r=".75"><stop offset="0" stop-color="#6fd7ff"/><stop offset=".55" stop-color="#1d6fa8"/><stop offset="1" stop-color="#0a2d4d"/></radialGradient></defs>
      <circle cx="21" cy="19.500" r="18.500" fill="url(#o)" stroke="#9ab" stroke-width=".8"/>
      <path d="M11 13l9-2v8h-9z" fill="#e8432b"/><path d="M22 10l9-1v10h-9z" fill="#7cc243"/><path d="M11 21h9v8l-9-2z" fill="#2b8fd8"/><path d="M22 21h9v10l-9-2z" fill="#f6c21c"/></svg></div>
    <div class="it" style="width:46px;margin-left:12px"><svg width="38" height="38" viewBox="0 0 38 38"><ellipse cx="19" cy="21" rx="18" ry="7" transform="rotate(-38 19 21)" fill="none" stroke="#e8c83a" stroke-width="2.500"/><text x="19" y="31" text-anchor="middle" font-family="Liberation Sans" font-weight="bold" font-size="34" fill="#0e85dc" stroke="#bfeaff" stroke-width=".8">e</text></svg></div>
    <div class="it" style="width:44px;margin-left:17px"><svg width="34" height="34" viewBox="0 0 34 34"><path d="M2 4h18l3 4h9v24H2z" fill="#f2d890"/><rect x="8" y="1" width="14" height="8" fill="#fff"/><rect x="4" y="2" width="4" height="3" fill="#3c3"/><rect x="18" y="6" width="10" height="5" fill="#fff"/><path d="M2 14h30v18H2z" fill="#f5e2a8"/><path d="M10 22h22v10h-7v-5H15v5h-5z" fill="#9fd4ee"/><circle cx="7" cy="25" r="3" fill="#fff"/></svg></div>
    <div class="it" style="width:30px;margin-left:24px"><svg width="28" height="30" viewBox="0 0 28 30"><rect x="1" y="2" width="26" height="26" rx="2" fill="#9db7cc" stroke="#c9d8e4"/><circle cx="12" cy="15" r="9" fill="#ee7a1f"/><path d="M9 9l9 6-9 6z" fill="#fff"/></svg></div>
    <div class="it open" style="width:59px;margin-left:18px"><svg width="36" height="36" viewBox="0 0 36 36"><text x="18" y="29" text-anchor="middle" font-family="Liberation Sans" font-weight="bold" font-style="italic" font-size="32" fill="#c8141e">N</text><rect x="3" y="13" width="16" height="5" fill="#222"/><path d="M24 29l4-8 4 8z" fill="#111"/></svg></div>
    <div class="it open" style="width:58px;margin-left:4px"><svg width="33" height="33" viewBox="0 0 33 33"><rect width="33" height="33" fill="#ff0"/><text x="16.500" y="10" text-anchor="middle" font-family="Liberation Serif" font-weight="bold" font-size="10" fill="#000">NRS</text><rect x="3" y="12" width="27" height="19" fill="#000"/><path d="M3 29h5V14h4v15h6v-3h6v3h6" fill="none" stroke="#0f0" stroke-width="1.500"/></svg></div>
    <div class="tray">
      <svg style="margin-left:7px" width="8" height="5"><path d="M0 5l4-5 4 5z" fill="#fff"/></svg>
      <svg style="margin-left:13px" width="15" height="15"><path d="M0 0h7v7H0zM8 0h7v7H8zM0 8h7v7H0zM8 8h7v7H8z" fill="#fff"/></svg>
      <svg style="margin-left:10px" width="16" height="20"><rect width="16" height="20" rx="2" fill="#2f7fc4" stroke="#cfe"/><path d="M3 5l4 6M7 5l-4 6" stroke="#fff"/><rect x="2" y="14" width="12" height="4" fill="#f2b035"/></svg>
      <svg style="margin-left:7px" width="17" height="16"><ellipse cx="7" cy="9" rx="7" ry="6" fill="#9aa5ad"/><path d="M5 9l3 4 7-10" fill="none" stroke="#4cc04c" stroke-width="2.400"/></svg>
      <svg style="margin-left:7px" width="14" height="18"><rect x="1" y="1" width="4" height="6" fill="#fff" stroke="#333"/><rect x="5" y="5" width="8" height="8" fill="#234" stroke="#ddd"/><path d="M3 7v9h8" fill="none" stroke="#fff"/></svg>
      <svg style="margin-left:10px" width="14" height="14"><path d="M0 5h3l4-4v12l-4-4H0z" fill="#e8e8e8"/><path d="M9 4q2 3 0 6M11 2q4 5 0 10" fill="none" stroke="#ddd"/></svg>
      <div class="clock">11:48 AM<br>3/31/2016</div><div class="sd"></div>
    </div>`;
  }
}

customElements.define("win-btn", WinBtn);
customElements.define("app-titlebar", AppTitlebar);
customElements.define("app-menubar", AppMenubar);
customElements.define("app-toolbar", AppToolbar);
customElements.define("mdi-area", MdiArea);
customElements.define("mdi-window", MdiWindow);
customElements.define("defect-map", DefectMap);
customElements.define("thickness-map", ThicknessMap);
customElements.define("x-combo", XCombo);
customElements.define("x-edit", XEdit);
customElements.define("x-check", XCheck);
customElements.define("x-btn", XBtn);
customElements.define("defect-form", DefectForm);
customElements.define("app-statusbar", AppStatusbar);
customElements.define("app-taskbar", AppTaskbar);
</script>
</body>
</html>
